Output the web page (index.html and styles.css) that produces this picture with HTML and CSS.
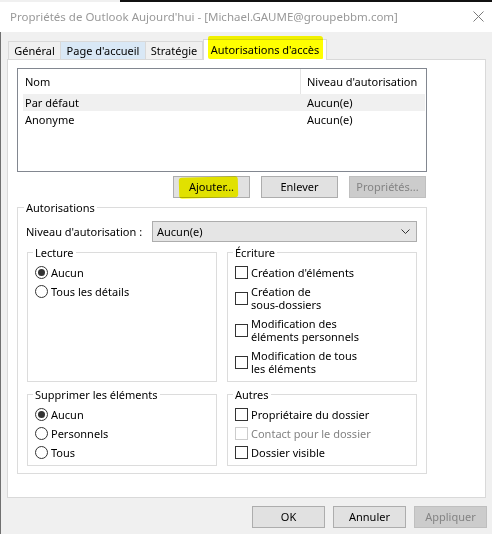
FILE: index.html
```html
<!DOCTYPE html>
<html lang="fr">
<head>
<meta charset="utf-8">
<title>Propriétés</title>
<link rel="stylesheet" href="styles.css">
</head>
<body>
<div class="annot annot-tab"></div>
<div class="annot annot-add"></div>
<div class="topline"></div>
<header class="titlebar">
  <span class="title">Propriétés de Outlook Aujourd'hui - [Michael.GAUME@groupebbm.com]</span>
  <svg class="close" width="11" height="11" viewBox="0 0 11 11"><path d="M0.5 0.5L10.5 10.5M10.5 0.5L0.5 10.5" stroke="#7a7a7a" stroke-width="1" fill="none"/></svg>
</header>
<main class="main">
  <nav class="tabs">
    <div class="tab t-gen">Général</div>
    <div class="tab t-page">Page d'accueil</div>
    <div class="tab t-strat">Stratégie</div>
    <div class="tab t-auth active">Autorisations d'accès</div>
  </nav>
  <section class="panel">
    <div class="list">
      <div class="list-head"><div class="hc1">Nom</div><div class="hc2">Niveau d'autorisation</div></div>
      <div class="row sel"><div class="rc1">Par défaut</div><div class="rc2">Aucun(e)</div></div>
      <div class="row"><div class="rc1">Anonyme</div><div class="rc2">Aucun(e)</div></div>
    </div>
    <div class="btnrow">
      <div class="btn wide">Ajouter...</div>
      <div class="btn wide">Enlever</div>
      <div class="btn wide disabled">Propriétés...</div>
    </div>
    <div class="group outer">
      <div class="gtitle">Autorisations</div>
      <div class="level">
        <span class="level-label">Niveau d'autorisation :</span>
        <div class="combo"><span>Aucun(e)</span><svg width="9" height="5" viewBox="0 0 9 5"><path d="M0.5 0.5L4.5 4.5L8.5 0.5" stroke="#333" stroke-width="1" fill="none"/></svg></div>
      </div>
      <div class="grid">
        <div class="group sub">
          <div class="gtitle">Lecture</div>
          <div class="items">
            <div class="item"><span class="radio on"></span><span>Aucun</span></div>
            <div class="item"><span class="radio"></span><span>Tous les détails</span></div>
          </div>
        </div>
        <div class="group sub">
          <div class="gtitle">Écriture</div>
          <div class="items">
            <div class="item"><span class="check"></span><span>Création d'éléments</span></div>
            <div class="item"><span class="check"></span><span class="two"><span class="ln">Création de</span><span class="ln">sous-dossiers</span></span></div>
            <div class="item"><span class="check"></span><span class="two"><span class="ln">Modification des</span><span class="ln">éléments personnels</span></span></div>
            <div class="item"><span class="check"></span><span class="two"><span class="ln">Modification de tous</span><span class="ln">les éléments</span></span></div>
          </div>
        </div>
        <div class="group sub">
          <div class="gtitle">Supprimer les éléments</div>
          <div class="items">
            <div class="item"><span class="radio on"></span><span>Aucun</span></div>
            <div class="item"><span class="radio"></span><span>Personnels</span></div>
            <div class="item"><span class="radio"></span><span>Tous</span></div>
          </div>
        </div>
        <div class="group sub">
          <div class="gtitle">Autres</div>
          <div class="items">
            <div class="item"><span class="check"></span><span>Propriétaire du dossier</span></div>
            <div class="item disabled"><span class="check"></span><span>Contact pour le dossier</span></div>
            <div class="item"><span class="check"></span><span>Dossier visible</span></div>
          </div>
        </div>
      </div>
    </div>
  </section>
  <div class="footer">
    <div class="btn small">OK</div>
    <div class="btn small">Annuler</div>
    <div class="btn small disabled">Appliquer</div>
  </div>
</main>
</body>
</html>
```

FILE: styles.css
```css
* { box-sizing: border-box; }
html, body { margin: 0; padding: 0; }
body {
  width: 492px;
  height: 534px;
  overflow: hidden;
  position: relative;
  background: #f0f0f0;
  font-family: "Noto Sans", "Open Sans", sans-serif;
  font-size: 11px;
  color: #000;
}
.topline {
  height: 2px;
  margin-left: 120px;
  background: #111;
}
.titlebar {
  height: 30px;
  background: #fff;
  display: flex;
  align-items: center;
  justify-content: space-between;
  padding: 0 8px 2px 10px;
}
.title {
  color: #999;
  font-size: 11.5px;
  white-space: nowrap;
}
.close { display: block; margin-top: 1px; }
.main {
  height: 502px;
  border-left: 1px solid #707070;
  padding-left: 6px;
}
.tabs {
  display: flex;
  align-items: flex-end;
  height: 27px;
  padding-left: 1px;
}
.tab {
  height: 18px;
  border: 1px solid #d9d9d9;
  border-bottom: none;
  background: #f0f0f0;
  display: flex;
  align-items: center;
  justify-content: center;
  white-space: nowrap;
  line-height: 14px;
}
.t-gen { width: 53px; }
.t-page { width: 86px; margin-left: -1px; background: #d9e8f6; }
.t-strat { width: 58px; margin-left: -1px; }
.t-auth { width: 124px; }
.tab.active {
  height: 21px;
  margin-bottom: -1px;
  background: #fff;
  position: relative;
  z-index: 1;
}
.panel {
  width: 479px;
  height: 439px;
  background: #fff;
  border: 1px solid #d9d9d9;
  padding: 8px 0 0 9px;
}
.list {
  width: 410px;
  height: 104px;
  border: 1px solid #828790;
}
.list-head {
  display: flex;
  height: 25px;
  line-height: 24px;
}
.hc1 {
  width: 283px;
  padding: 1px 0 0 7px;
  border-right: 1px solid #e5e5e5;
}
.hc2 { padding: 1px 0 0 6px; }
.row {
  display: flex;
  height: 17px;
  line-height: 16px;
  margin: 0 1px 0 5px;
  padding-top: 1px;
}
.row.sel { background: #f0f0f0; }
.rc1 { width: 284px; padding-left: 2px; }
.btnrow {
  width: 410px;
  margin-top: 4px;
  display: flex;
  justify-content: flex-end;
  gap: 11px;
  padding-right: 1px;
}
.btn {
  height: 22px;
  background: #e1e1e1;
  border: 1px solid #adadad;
  display: flex;
  align-items: center;
  justify-content: center;
  line-height: 14px;
}
.btn.wide { width: 77px; }
.btn.small { width: 73px; }
.btn.disabled {
  background: #cccccc;
  border-color: #bfbfbf;
  color: #838383;
}
.group {
  border: 1px solid #dcdcdc;
}
.gtitle {
  width: fit-content;
  margin: -8px 0 0 6px;
  padding: 0 2px;
  background: #fff;
  line-height: 15px;
  height: 15px;
}
.outer {
  width: 410px;
  height: 267px;
  margin-top: 9px;
}
.level {
  display: flex;
  align-items: center;
  margin: 6px 9px 0 8px;
  height: 21px;
}
.level-label { width: 126px; flex: none; white-space: nowrap; }
.combo {
  flex: 1;
  height: 21px;
  background: #e5e5e5;
  border: 1px solid #adadad;
  display: flex;
  align-items: center;
  justify-content: space-between;
  padding: 0 6px 0 4px;
}
.combo svg { display: block; }
.grid {
  display: grid;
  grid-template-columns: 190px 190px;
  column-gap: 10px;
  row-gap: 12px;
  margin: 10px 9px 0 9px;
}
.sub .gtitle { margin-left: 5px; }
.items {
  display: flex;
  flex-direction: column;
  gap: 6px;
  padding: 6px 0 6px 7px;
}
.item {
  display: flex;
  align-items: center;
  gap: 3px;
  line-height: 13px;
}
.two {
  display: flex;
  flex-direction: column;
}
.ln {
  display: block;
  height: 13px;
  line-height: 13px;
}
.radio {
  width: 13px;
  height: 13px;
  flex: none;
  border: 1px solid #333;
  border-radius: 50%;
  background: #fff;
  display: flex;
  align-items: center;
  justify-content: center;
}
.radio.on::after {
  content: "";
  width: 7px;
  height: 7px;
  border-radius: 50%;
  background: #333;
}
.check {
  width: 13px;
  height: 13px;
  flex: none;
  border: 1px solid #333;
  background: #fff;
}
.item.disabled { color: #838383; }
.item.disabled .check { border-color: #cccccc; }
.footer {
  display: flex;
  justify-content: flex-end;
  gap: 8px;
  margin-top: 8px;
  padding-right: 5px;
}
.annot {
  position: absolute;
  background: #ffff00;
  mix-blend-mode: multiply;
  z-index: 10;
}
.annot-tab {
  left: 208px;
  top: 36px;
  width: 115px;
  height: 23px;
  border-radius: 2px 3px 1px 2px;
}
.annot-add {
  left: 179px;
  top: 177px;
  width: 59px;
  height: 21px;
  border-radius: 3px;
  transform: rotate(-1.5deg);
}
```
